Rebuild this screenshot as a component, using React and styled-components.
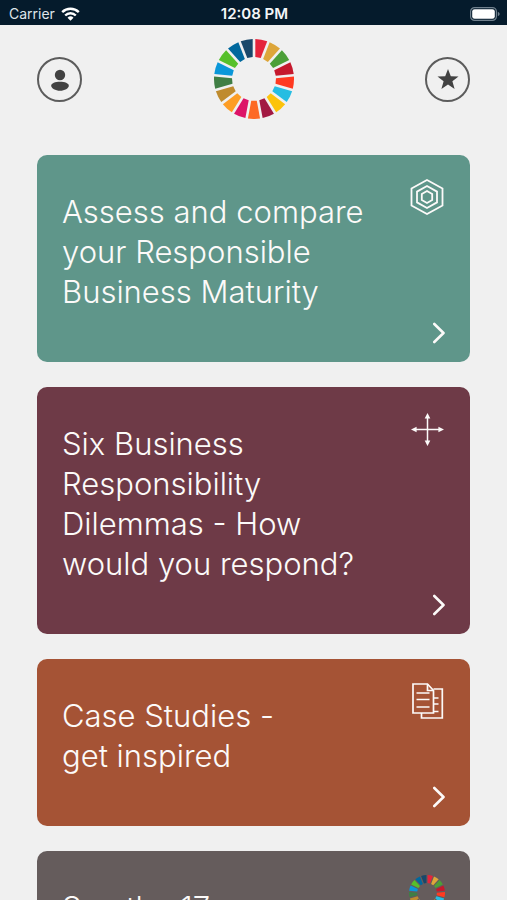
import React from "react";
import styled, { createGlobalStyle } from "styled-components";

const GlobalStyle = createGlobalStyle`
  *, *::before, *::after { box-sizing: border-box; }
  html { scrollbar-width: none; }
  body {
    margin: 0;
    background: #f0f0f0;
    font-family: Inter, "Liberation Sans", sans-serif;
  }
`;

const Page = styled.div`
  min-height: 100vh;
  background: #f0f0f0;
`;

const StatusBar = styled.div`
  display: grid;
  grid-template-columns: 1fr auto 1fr;
  align-items: center;
  height: 25px;
  padding: 2px 7px 0 9px;
  background: #051b2c;
  color: #f4f6f8;
  font-size: 14px;
  line-height: 20px;
`;

const Carrier = styled.div`
  display: flex;
  align-items: center;
  gap: 6px;
  color: #dfe5ea;
`;

const Clock = styled.time`
  font-size: 15px;
  font-weight: 600;
`;

const BatteryIcon = styled.svg`
  justify-self: end;
`;

const Header = styled.header`
  display: flex;
  align-items: center;
  justify-content: space-between;
  padding: 14px 37px 36px;
`;

const RoundButton = styled.button`
  display: grid;
  place-items: center;
  width: 45px;
  height: 45px;
  padding: 0;
  border: 2px solid #5c5c5c;
  border-radius: 50%;
  background: transparent;
  color: #424242;
  cursor: pointer;
`;

const CardList = styled.main`
  display: flex;
  flex-direction: column;
  gap: 25px;
  padding: 0 37px 25px;
`;

const Card = styled.a`
  display: flex;
  justify-content: space-between;
  gap: 16px;
  padding: 0 25px;
  border-radius: 10px;
  background: ${(p) => p.$color};
  color: #fcfaf9;
  text-decoration: none;
`;

const CardTitle = styled.h2`
  margin: 0;
  padding: 37px 0 50px;
  font-size: 31px;
  font-weight: 400;
  line-height: 40px;
  white-space: pre-line;
  font-weight: 350;
`;

const CardSide = styled.div`
  display: flex;
  flex: none;
  flex-direction: column;
  align-items: flex-end;
  justify-content: space-between;
  padding: 24px 0 17px;
`;

const Icon = styled.svg`
  display: block;
  fill: none;
  stroke: currentColor;
`;

const GOAL_COLORS = [
  "#e5243b", "#dda63a", "#4c9f38", "#c5192d", "#ff3a21", "#26bde2",
  "#fcc30b", "#a21942", "#fd6925", "#dd1367", "#fd9d24", "#bf8b2e",
  "#3f7e44", "#0a97d9", "#56c02b", "#00689d", "#19486a",
];

const OUTER = 40;
const INNER = 22;
const HALF_GAP = 1.3;

function point(radius, angle) {
  return `${(40 + radius * Math.sin(angle)).toFixed(2)} ${(40 - radius * Math.cos(angle)).toFixed(2)}`;
}

function segmentPath(index) {
  const step = (2 * Math.PI) / GOAL_COLORS.length;
  const start = index * step;
  const end = start + step;
  const o = HALF_GAP / OUTER;
  const i = HALF_GAP / INNER;
  return `M${point(OUTER, start + o)}A${OUTER} ${OUTER} 0 0 1 ${point(OUTER, end - o)}L${point(INNER, end - i)}L${point(INNER, start + i)}Z`;
}

function GoalsWheel({ size }) {
  return (
    <svg width={size} height={size} viewBox="0 0 80 80" aria-hidden="true">
      {GOAL_COLORS.map((color, index) => (
        <path key={color} d={segmentPath(index)} fill={color} />
      ))}
    </svg>
  );
}

function WifiIcon() {
  return (
    <svg width="19" height="14" viewBox="0 0 19 14" aria-hidden="true">
      <g fill="none" stroke="#fff" strokeWidth="2.4">
        <path d="M1.2 5.2a11.8 11.8 0 0 1 16.6 0" />
        <path d="M4.2 8.5a7.5 7.5 0 0 1 10.6 0" />
      </g>
      <path d="M9.5 13.8 6.5 10.8a4.3 4.3 0 0 1 6 0Z" fill="#fff" />
    </svg>
  );
}

function Battery() {
  return (
    <BatteryIcon width="30" height="14" viewBox="0 0 30 14" aria-hidden="true">
      <rect x="0.6" y="0.6" width="25.8" height="12.8" rx="4" fill="none" stroke="#70808d" strokeWidth="1.2" />
      <rect x="2.2" y="2.2" width="22.6" height="9.6" rx="2.4" fill="#fff" />
      <path d="M27.8 4.8c2.4.8 2.4 3.6 0 4.4Z" fill="#70808d" />
    </BatteryIcon>
  );
}

function PersonIcon() {
  return (
    <svg width="20" height="24" viewBox="0 0 20 24" fill="currentColor" aria-hidden="true">
      <circle cx="10" cy="8" r="5.2" />
      <path d="M10 14.8c4.8 0 8.8 1.5 8.8 4S14.6 23.8 10 23.8s-8.8-2.5-8.8-5S5.200 14.800 10 14.800Z" />
    </svg>
  );
}

function StarIcon() {
  return (
    <svg width="22" height="22" viewBox="0 0 22 22" fill="currentColor" aria-hidden="true">
      <path d="m11 1 2.8 7.2 7.7.2-6.1 4.8 2.2 7.800-6.600-4.500L4.400 21l2.200-7.800L.5 8.400l7.700-.2Z" />
    </svg>
  );
}

function HexagonsIcon() {
  return (
    <Icon width="36" height="36" viewBox="0 0 36 36" strokeWidth="1.8" aria-hidden="true">
      <path d="M18 1 33.5 9.5v17L18 35 2.5 26.5v-17Z" />
      <path d="M18 7 28 12.6v10.8L18 29 8 23.400V12.600Z" />
      <path d="m18 12 5.2 3v6L18 24l-5.200-3v-6Z" />
    </Icon>
  );
}

function ArrowsIcon() {
  return (
    <Icon width="36" height="36" viewBox="0 0 36 36" strokeWidth="1.5" aria-hidden="true">
      <path d="M18.5 5v27M5 18.5h27" />
      <path
        d="m18.5 2 2.8 5.6h-5.6ZM18.5 35l2.8-5.6h-5.6ZM2 18.5l5.6-2.8v5.6ZM35 18.5l-5.6-2.8v5.6Z"
        fill="currentColor"
        stroke="none"
      />
    </Icon>
  );
}

function DocumentsIcon() {
  return (
    <Icon width="36" height="36" viewBox="0 0 36 36" strokeWidth="1.7" aria-hidden="true">
      <path d="M4 1h14.5L24.5 7.5V30H4Z" />
      <path d="M18.5 1v6.5h6" />
      <path d="M24.5 6h8.8v29H12.5v-5" />
      <path d="M7.5 10h13M7.5 16.5h13M7.5 24h13M25 15h4.5M25 21h4.5M25 28.5h4.5" />
    </Icon>
  );
}

function Chevron() {
  return (
    <Icon width="13" height="24" viewBox="0 0 13 24" strokeWidth="2.6" strokeLinecap="round" strokeLinejoin="round" aria-hidden="true">
      <path d="M2.3 3 11.5 12 2.3 21" />
    </Icon>
  );
}

const CARDS = [
  { id: "maturity", title: "Assess and compare your Responsible Business Maturity", color: "#5f968a", icon: <HexagonsIcon /> },
  { id: "dilemmas", title: "Six Business Responsibility Dilemmas - How would you respond?", color: "#6e3a47", icon: <ArrowsIcon /> },
  { id: "cases", title: "Case Studies -\nget inspired", color: "#a55335", icon: <DocumentsIcon /> },
  { id: "goals", title: "See the 17", color: "#655c5c", icon: <GoalsWheel size={36} /> },
];

export default function App() {
  return (
    <Page>
      <GlobalStyle />
      <StatusBar>
        <Carrier>
          Carrier
          <WifiIcon />
        </Carrier>
        <Clock>12:08 PM</Clock>
        <Battery />
      </StatusBar>
      <Header>
        <RoundButton type="button" aria-label="Profile">
          <PersonIcon />
        </RoundButton>
        <GoalsWheel size={80} />
        <RoundButton type="button" aria-label="Favourites">
          <StarIcon />
        </RoundButton>
      </Header>
      <CardList>
        {CARDS.map((card) => (
          <Card key={card.id} href={`#${card.id}`} $color={card.color}>
            <CardTitle>{card.title}</CardTitle>
            <CardSide>
              {card.icon}
              <Chevron />
            </CardSide>
          </Card>
        ))}
      </CardList>
    </Page>
  );
}
